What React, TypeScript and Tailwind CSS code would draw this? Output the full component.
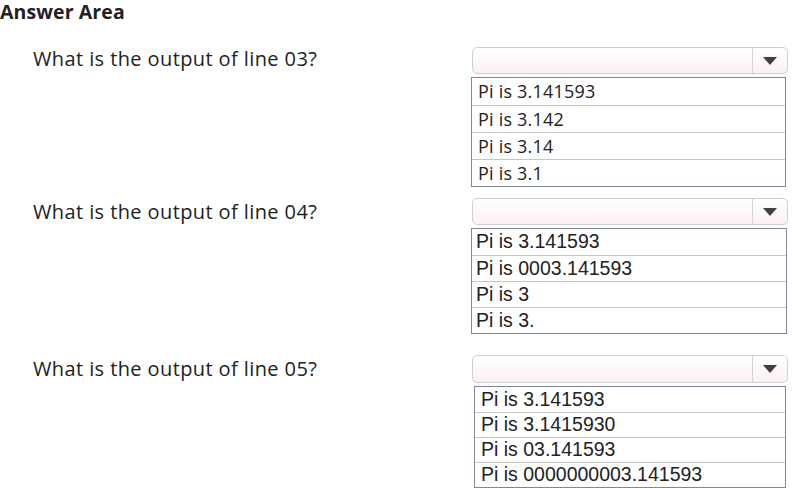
const questions = [
  {
    label: 'What is the output of line 03?',
    options: ['Pi is 3.141593', 'Pi is 3.142', 'Pi is 3.14', 'Pi is 3.1'],
  },
  {
    label: 'What is the output of line 04?',
    options: ['Pi is 3.141593', 'Pi is 0003.141593', 'Pi is 3', 'Pi is 3.'],
  },
  {
    label: 'What is the output of line 05?',
    options: ['Pi is 3.141593', 'Pi is 3.1415930', 'Pi is 03.141593', 'Pi is 0000000003.141593'],
  },
];

const Dropdown = ({ tall }: { tall?: boolean }) => (
  <div className={`flex ${tall ? 'h-[28px]' : 'h-[27px]'} w-[316px] ml-px rounded-[5px] border border-[#cfcfcf] bg-gradient-to-b from-white to-[#fcf0f2]`}>
    <div className="flex-1" />
    <div className="w-[35px] border-l border-[#d4d4d4] flex items-center justify-center">
      <svg width="14" height="8" viewBox="0 0 14 8">
        <path d="M0 0 L14 0 L7 8 Z" fill="#404040" />
      </svg>
    </div>
  </div>
);

export default function App() {
  return (
    <div className="w-[792px] h-[489px] bg-white overflow-hidden text-[#222]">
      <h1 className="pt-px font-['Open_Sans',sans-serif] font-bold text-[19.5px] leading-[22px] tracking-[0.1px]">
        Answer Area
      </h1>

      <div className="mt-[24px] flex">
        <div className="w-[471px] pl-[33px] h-[27px] flex items-center font-['Open_Sans',sans-serif] text-[20px] tracking-[0.4px] pb-[3px]">
          {questions[0].label}
        </div>
        <div className="flex flex-col gap-[3px]">
          <Dropdown />
          <div className="w-[315px] border border-[#7f8898] font-['Open_Sans',sans-serif] text-[18px] tracking-[0.2px]">
            {questions[0].options.map((o, i) => (
              <div key={o} className={`h-[27px] px-[6px] flex items-center ${i > 0 ? 'border-t border-[#c6c6c6]' : ''}`}>
                {o}
              </div>
            ))}
          </div>
        </div>
      </div>

      <div className="mt-[11px] flex">
        <div className="w-[471px] pl-[33px] h-[27px] flex items-center font-['Open_Sans',sans-serif] text-[20px] tracking-[0.4px]">
          {questions[1].label}
        </div>
        <div className="flex flex-col gap-[3px]">
          <Dropdown />
          <div className="w-[316px] border border-[#7f8898] font-['Liberation_Sans',Arial,sans-serif] text-[19.5px]">
            {questions[1].options.map((o, i) => (
              <div key={o} className={`h-[26px] px-[4px] flex items-center ${i > 0 ? 'border-t border-[#c6c6c6]' : ''}`}>
                {o}
              </div>
            ))}
          </div>
        </div>
      </div>

      <div className="mt-[21px] flex">
        <div className="w-[471px] pl-[33px] h-[28px] flex items-center font-['Open_Sans',sans-serif] text-[20px] tracking-[0.4px]">
          {questions[2].label}
        </div>
        <div className="flex flex-col gap-[3px]">
          <Dropdown tall />
          <div className="ml-[3px] w-[312px] border border-[#7f8898] font-['Liberation_Sans',Arial,sans-serif] text-[19.5px]">
            {questions[2].options.map((o, i) => (
              <div key={o} className={`h-[25px] px-[6px] flex items-center ${i > 0 ? 'border-t border-[#c6c6c6]' : ''}`}>
                {o}
              </div>
            ))}
          </div>
        </div>
      </div>
    </div>
  );
}
